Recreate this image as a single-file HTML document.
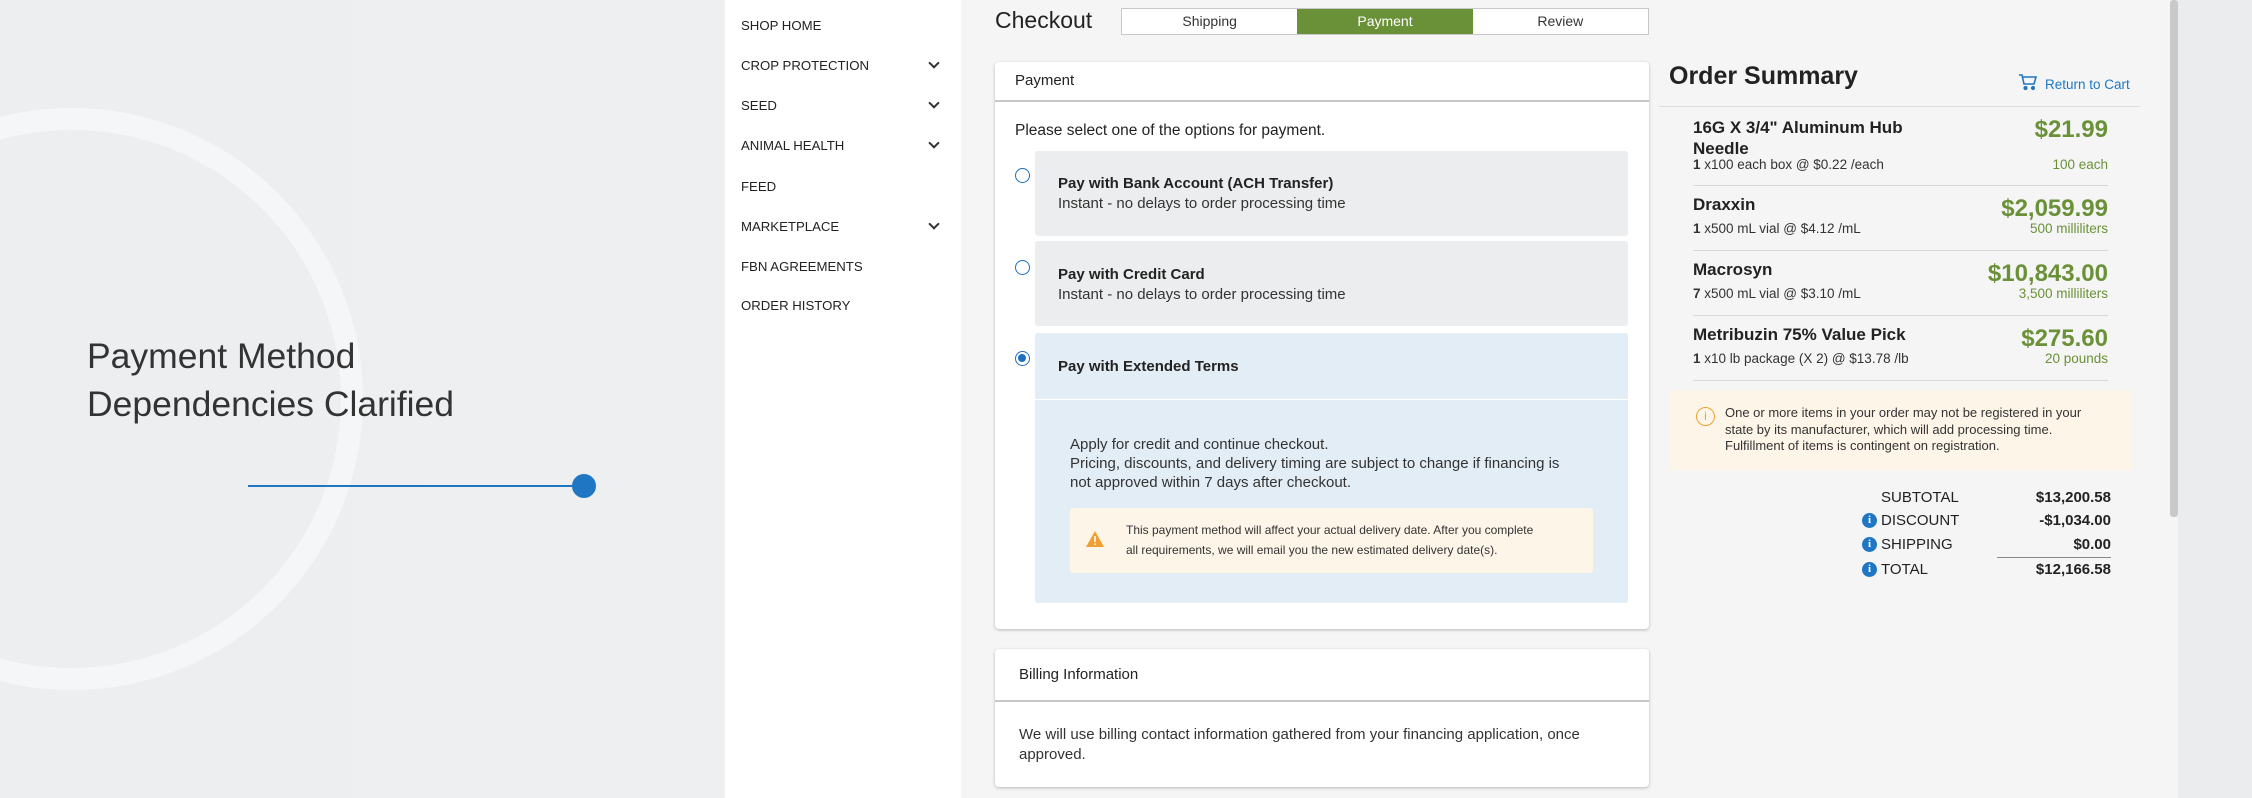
<!DOCTYPE html>
<html><head><meta charset="utf-8"><style>
*{margin:0;padding:0;box-sizing:border-box}
body{width:2252px;height:798px;overflow:hidden;position:relative;font-family:"Liberation Sans",Arial,sans-serif;background:linear-gradient(90deg,#eceef0,#f1f2f3);color:#333}
.a{position:absolute}
.nav{font-size:13.2px;color:#222;left:741px}
.chev{position:absolute;left:930px;width:8px;height:8px;border-right:2px solid #333;border-bottom:2px solid #333;transform:rotate(45deg)}
.card{background:#fff;border-radius:4px;box-shadow:0 1px 3px rgba(0,0,0,.25)}
.opt{position:absolute;left:1035px;width:593px;background:#ecedee;border-radius:3px}
.ot{position:absolute;left:23px;font-size:15px;font-weight:bold;color:#222}
.os{position:absolute;left:23px;font-size:15px;color:#333}
.radio{position:absolute;left:1015px;width:15px;height:15px;border:1.5px solid #1f6fc0;border-radius:50%;background:#fff}
.iname{position:absolute;left:1693px;font-size:17px;font-weight:bold;color:#222}
.isub{position:absolute;left:1693px;font-size:13.5px;color:#333}
.isub b{font-weight:bold}
.price{position:absolute;right:144px;font-size:24px;font-weight:bold;color:#6a9138;text-align:right}
.unit{position:absolute;right:144px;font-size:13.5px;color:#6a9138;text-align:right}
.hr{position:absolute;left:1693px;width:415px;height:1px;background:#d8d8d8}
.tl{position:absolute;left:1881px;font-size:15px;color:#222}
.tv{position:absolute;right:141px;font-size:15px;font-weight:bold;color:#222;text-align:right}
.info{position:absolute;left:1862px;width:15px;height:15px;border-radius:50%;background:#1f77c4;color:#fff;font-size:11px;font-weight:bold;text-align:center;line-height:15px;font-family:"Liberation Serif",serif}
</style></head><body>
<div class="a" style="left:-219px;top:108px;width:582px;height:582px;border-radius:50%;border:22px solid #f5f6f7"></div>
<div class="a" style="left:87px;top:332px;font-size:35.5px;line-height:48px;color:#333">Payment Method<br>Dependencies Clarified</div>
<div class="a" style="left:248px;top:485px;width:330px;height:1.5px;background:#1f77c4"></div>
<div class="a" style="left:572px;top:474px;width:24px;height:24px;border-radius:50%;background:#1f77c4"></div>

<div class="a" style="left:725px;top:0;width:1453px;height:798px;background:#f5f5f5"></div>
<div class="a" style="left:725px;top:0;width:236px;height:798px;background:#fff"></div>
<div class="a" style="left:2178px;top:0;width:74px;height:798px;background:#ebeced"></div>
<div class="a" style="left:2170px;top:0;width:8px;height:517px;background:#c8c9ca;border-radius:3px"></div>

<div class="a nav" style="top:18px">SHOP HOME</div>
<div class="a nav" style="top:58px">CROP PROTECTION</div><div class="chev" style="top:59px"></div>
<div class="a nav" style="top:98px">SEED</div><div class="chev" style="top:99px"></div>
<div class="a nav" style="top:138px">ANIMAL HEALTH</div><div class="chev" style="top:139px"></div>
<div class="a nav" style="top:179px">FEED</div>
<div class="a nav" style="top:219px">MARKETPLACE</div><div class="chev" style="top:220px"></div>
<div class="a nav" style="top:259px">FBN AGREEMENTS</div>
<div class="a nav" style="top:298px">ORDER HISTORY</div>

<div class="a" style="left:995px;top:7px;font-size:23px;color:#222">Checkout</div>
<div class="a" style="left:1121px;top:8px;width:528px;height:27px;border:1.5px solid #c8c8c8;background:#fff;display:flex;font-size:14px;line-height:24px;text-align:center;color:#333">
<div style="flex:1">Shipping</div><div style="flex:1;background:#6a9138;color:#fff">Payment</div><div style="flex:1">Review</div></div>

<div class="a card" style="left:995px;top:62px;width:654px;height:567px"></div>
<div class="a" style="left:1015px;top:72px;font-size:15px;color:#222">Payment</div>
<div class="a" style="left:995px;top:100px;width:654px;height:1.5px;background:#c8c8c8"></div>
<div class="a" style="left:1015px;top:122px;font-size:15.5px;color:#222">Please select one of the options for payment.</div>

<div class="opt" style="top:151px;height:85px"><div class="ot" style="top:24px">Pay with Bank Account (ACH Transfer)</div><div class="os" style="top:44px">Instant - no delays to order processing time</div></div>
<div class="opt" style="top:241px;height:85px"><div class="ot" style="top:25px">Pay with Credit Card</div><div class="os" style="top:45px">Instant - no delays to order processing time</div></div>
<div class="opt" style="top:333px;height:270px;background:#e3edf6"><div class="ot" style="top:25px">Pay with Extended Terms</div>
<div class="a" style="left:0;top:66px;width:593px;height:1px;background:#fff"></div></div>
<div class="radio" style="top:168px"></div>
<div class="radio" style="top:260px"></div>
<div class="radio" style="top:351px"><div style="position:absolute;left:2px;top:2px;width:8px;height:8px;border-radius:50%;background:#1f6fc0"></div></div>
<div class="a" style="left:1070px;top:435px;font-size:15px;line-height:19px;color:#333">Apply for credit and continue checkout.<br>Pricing, discounts, and delivery timing are subject to change if financing is<br>not approved within 7 days after checkout.</div>
<div class="a" style="left:1070px;top:508px;width:523px;height:65px;background:#fdf5e8;border-radius:3px"></div>
<svg class="a" style="left:1085px;top:530px" width="20" height="18" viewBox="0 0 20 18"><path d="M10 1L19 17H1Z" fill="#f0a030"/><rect x="9.2" y="6" width="1.6" height="6" fill="#fff"/><rect x="9.2" y="13.5" width="1.6" height="1.6" fill="#fff"/></svg>
<div class="a" style="left:1126px;top:520px;font-size:12px;line-height:20px;color:#333">This payment method will affect your actual delivery date. After you complete<br>all requirements, we will email you the new estimated delivery date(s).</div>

<div class="a card" style="left:995px;top:649px;width:654px;height:138px"></div>
<div class="a" style="left:1019px;top:666px;font-size:15px;color:#222">Billing Information</div>
<div class="a" style="left:995px;top:700px;width:654px;height:1.5px;background:#c8c8c8"></div>
<div class="a" style="left:1019px;top:725px;font-size:15px;line-height:20px;color:#333">We will use billing contact information gathered from your financing application, once<br>approved.</div>

<div class="a" style="left:1669px;top:62px;font-size:25px;font-weight:bold;color:#222">Order Summary</div>
<svg class="a" style="left:2018px;top:73px" width="20" height="18" viewBox="0 0 20 18" fill="none" stroke="#1f77c4" stroke-width="1.6"><path d="M1 2h3l2 9h10l2-7H5"/><circle cx="7.5" cy="15" r="1.3" fill="#1f77c4"/><circle cx="15" cy="15" r="1.3" fill="#1f77c4"/></svg>
<div class="a" style="left:2045px;top:77px;font-size:13.5px;color:#1f77c4">Return to Cart</div>
<div class="a" style="left:1659px;top:106px;width:481px;height:1px;background:#ddd"></div>

<div class="iname" style="top:117px;line-height:21px">16G X 3/4" Aluminum Hub<br>Needle</div>
<div class="isub" style="top:157px"><b>1</b> x100 each box @ $0.22 /each</div>
<div class="price" style="top:116px">$21.99</div><div class="unit" style="top:157px">100 each</div>
<div class="hr" style="top:185px"></div>
<div class="iname" style="top:195px">Draxxin</div>
<div class="isub" style="top:221px"><b>1</b> x500 mL vial @ $4.12 /mL</div>
<div class="price" style="top:195px">$2,059.99</div><div class="unit" style="top:221px">500 milliliters</div>
<div class="hr" style="top:250px"></div>
<div class="iname" style="top:260px">Macrosyn</div>
<div class="isub" style="top:286px"><b>7</b> x500 mL vial @ $3.10 /mL</div>
<div class="price" style="top:260px">$10,843.00</div><div class="unit" style="top:286px">3,500 milliliters</div>
<div class="hr" style="top:315px"></div>
<div class="iname" style="top:325px">Metribuzin 75% Value Pick</div>
<div class="isub" style="top:351px"><b>1</b> x10 lb package (X 2) @ $13.78 /lb</div>
<div class="price" style="top:325px">$275.60</div><div class="unit" style="top:351px">20 pounds</div>
<div class="hr" style="top:380px"></div>

<div class="a" style="left:1669px;top:390px;width:462px;height:80px;background:#fdf5e8"></div>
<div class="a" style="left:1696px;top:407px;width:19px;height:19px;border:1.8px solid #f0a030;border-radius:50%;color:#f0a030;font-size:12px;text-align:center;line-height:16px">i</div>
<div class="a" style="left:1725px;top:405px;font-size:13px;line-height:16.5px;color:#333">One or more items in your order may not be registered in your<br>state by its manufacturer, which will add processing time.<br>Fulfillment of items is contingent on registration.</div>

<div class="tl" style="top:489px">SUBTOTAL</div><div class="tv" style="top:489px">$13,200.58</div>
<div class="info" style="top:513px">i</div><div class="tl" style="top:512px">DISCOUNT</div><div class="tv" style="top:512px">-$1,034.00</div>
<div class="info" style="top:537px">i</div><div class="tl" style="top:536px">SHIPPING</div><div class="tv" style="top:536px">$0.00</div>
<div class="a" style="left:1997px;top:557px;width:114px;height:1px;background:#888"></div>
<div class="info" style="top:562px">i</div><div class="tl" style="top:561px">TOTAL</div><div class="tv" style="top:561px">$12,166.58</div>
</body></html>
